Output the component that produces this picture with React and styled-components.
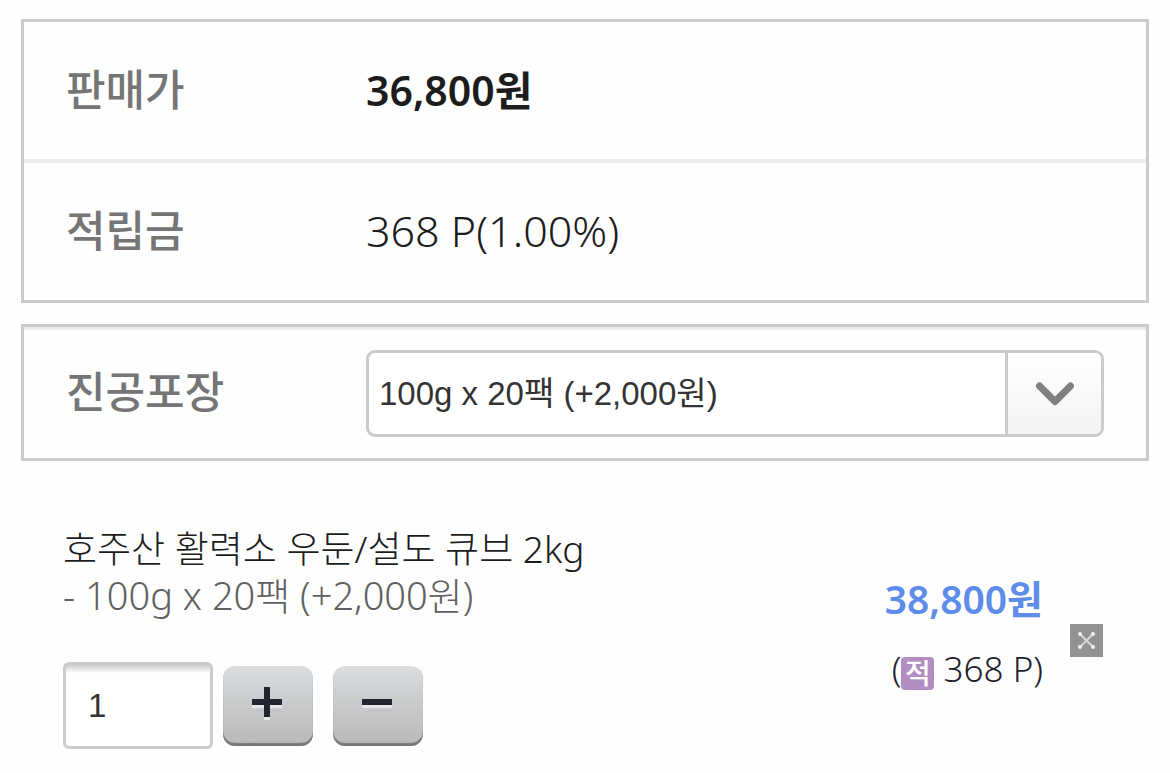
import React, { useState } from 'react';
import styled, { createGlobalStyle } from 'styled-components';

const GlobalStyle = createGlobalStyle`
    * {
        box-sizing: border-box;
    }
    body {
        margin: 0;
        background-color: #FEFEFE;
        color: #1C1C1C;
        font-family: "Noto Sans", "Noto Sans CJK KR", sans-serif;
        font-weight: 300;
    }
    button, input, select {
        margin: 0;
        font-family: inherit;
    }
`
const Page = styled.main`
    padding: 19px 21px 24px;
`
const Panel = styled.dl`
    margin: 0 0 21px;
    border: 3px solid #CBCBCB;
`
const Row = styled.div`
    display: flex;
    align-items: center;
    min-height: ${(props) => (props.$compact ? "131px" : "137px")};
    padding: 0 42px ${(props) => (props.$compact ? "2px" : "0")};
    border-top: ${(props) => (props.$line ? `${props.$line}px solid #EBEBEB` : "none")};
    box-sizing: ${(props) => (props.$compact ? "border-box" : "content-box")};
`
const Label = styled.dt`
    flex: 0 0 300px;
    padding-bottom: 2px;
    color: #757575;
    font-size: 43px;
    line-height: 60px;
    font-weight: 500;
`
const Value = styled.dd`
    flex: 1;
    margin: 0;
    padding-bottom: ${(props) => (props.as ? "0" : "2px")};
    font-size: ${(props) => (props.$strong ? "41px" : "43px")};
    line-height: 60px;
    font-weight: ${(props) => (props.$strong ? 600 : 300)};
`
const SelectBox = styled.div`
    position: relative;
    border: 3px solid #CBCBCB;
    border-radius: 9px;
    background-color: #FFFFFF;
    overflow: hidden;

    select {
        display: block;
        width: 100%;
        height: 81px;
        padding: 0 108px 0 10px;
        border: none;
        background: transparent;
        color: #333333;
        font-family: "Liberation Sans", "Noto Sans CJK KR", sans-serif;
        font-size: 33px;
        font-weight: 400;
        appearance: none;
    }
`
const Arrow = styled.span`
    position: absolute;
    top: 0;
    right: 0;
    bottom: 0;
    display: flex;
    align-items: center;
    justify-content: center;
    width: 96px;
    border-left: 3px solid #CBCBCB;
    background: linear-gradient(#FFFFFF, #F3F3F3);
    pointer-events: none;
`
const Item = styled.section`
    display: flex;
    align-items: center;
    padding: 43px 46px 0 42px;
`
const Info = styled.div`
    flex: 1;
`
const Name = styled.h2`
    margin: 0;
    font-size: 37px;
    line-height: 47px;
    font-weight: 300;
`
const Option = styled.p`
    margin: 0 0 43px;
    color: #606060;
    font-size: 38px;
    line-height: 47px;
`
const Quantity = styled.div`
    display: flex;
    align-items: center;

    input {
        width: 150px;
        height: 87px;
        margin-right: 10px;
        padding: 0 22px;
        border: 3px solid #CBCBCB;
        border-radius: 6px;
        background: linear-gradient(#CBCBCB, #FFFFFF 8px);
        color: #333333;
        font-family: "Liberation Sans", sans-serif;
        font-size: 33px;
    }
`
const StepButton = styled.button`
    display: flex;
    align-items: center;
    justify-content: center;
    width: 90px;
    height: 80px;
    margin-right: 20px;
    padding: 0 2px 4px 0;
    border: none;
    border-radius: 12px;
    background: linear-gradient(#DCDDDF, #CACBCC 45%, #B9B9B9);
    box-shadow: inset 0 -3px 1px #777777;
`
const Total = styled.div`
    margin-right: 27px;
    padding-bottom: 6px;
    text-align: right;
`
const Price = styled.p`
    margin: 0 0 14px;
    color: #5D8CEB;
    font-size: 39px;
    line-height: 56px;
    font-weight: 600;
`
const Points = styled.p`
    display: flex;
    align-items: center;
    justify-content: flex-end;
    margin: 0;
    color: #20202C;
    font-size: 35px;
    line-height: 56px;
    white-space: pre;
`
const Badge = styled.span`
    width: 33px;
    height: 33px;
    margin-top: 8px;
    border-radius: 4px;
    background-color: #B18DC2;
    color: #FFFFFF;
    font-size: 28px;
    line-height: 33px;
    font-weight: 500;
    text-align: center;
`
const Remove = styled.button`
    display: flex;
    align-items: center;
    justify-content: center;
    width: 33px;
    height: 33px;
    margin-top: 6px;
    padding: 0;
    border: none;
    background-color: #929292;
`

const StepIcon = ({ plus }) => (
    <svg width="30" height="34" viewBox="0 0 30 34" aria-hidden="true">
        <path d={plus ? "M0 19h30M12 31h6" : "M0 19h30"} stroke="#E6E6E6" strokeWidth="4" />
        <path d={plus ? "M0 15h30M15 0v30" : "M0 15h30"} stroke="#222430" strokeWidth="6" />
    </svg>
)

export default function App() {
    const [count, setCount] = useState(1);

    return (
        <Page>
            <GlobalStyle />
            <Panel>
                <Row>
                    <Label>판매가</Label>
                    <Value $strong>36,800원</Value>
                </Row>
                <Row $line={4}>
                    <Label>적립금</Label>
                    <Value>368 P(1.00%)</Value>
                </Row>
            </Panel>
            <Panel as="div">
                <Row $compact $line={3}>
                    <Label as="label" htmlFor="pack">진공포장</Label>
                    <Value as="div">
                        <SelectBox>
                            <select id="pack" defaultValue="100">
                                <option value="100">100g x 20팩 (+2,000원)</option>
                            </select>
                            <Arrow>
                                <svg width="40" height="26" viewBox="0 0 40 26" fill="none" aria-hidden="true">
                                    <path d="M4.500 6L20 21.500L35.500 6" stroke="#808080" strokeWidth="7" strokeLinecap="round" strokeLinejoin="round" />
                                </svg>
                            </Arrow>
                        </SelectBox>
                    </Value>
                </Row>
            </Panel>
            <Item>
                <Info>
                    <Name>호주산 활력소 우둔/설도 큐브 2kg</Name>
                    <Option>- 100g x 20팩 (+2,000원)</Option>
                    <Quantity>
                        <input
                            type="text"
                            inputMode="numeric"
                            aria-label="수량"
                            value={count}
                            onChange={(e) => setCount(Number(e.target.value) || 1)}
                        />
                        <StepButton type="button" aria-label="수량 증가" onClick={() => setCount(count + 1)}>
                            <StepIcon plus />
                        </StepButton>
                        <StepButton type="button" aria-label="수량 감소" onClick={() => setCount(Math.max(1, count - 1))}>
                            <StepIcon />
                        </StepButton>
                    </Quantity>
                </Info>
                <Total>
                    <Price>38,800원</Price>
                    <Points>(<Badge>적</Badge> 368 P)</Points>
                </Total>
                <Remove type="button" aria-label="삭제">
                    <svg width="17" height="17" viewBox="0 0 17 17" aria-hidden="true">
                        <path d="M2 2l13 13M15 2L2 15" stroke="#D8D8D8" strokeWidth="2" />
                        <path d="M2 2h0M15 2h0M2 15h0M15 15h0" stroke="#F0F0F0" strokeWidth="4" strokeLinecap="round" />
                    </svg>
                </Remove>
            </Item>
        </Page>
    )
}
